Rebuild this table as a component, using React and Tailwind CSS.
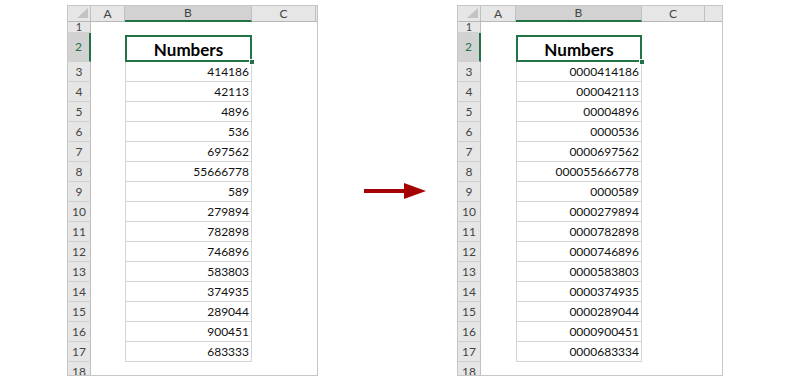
const LEFT = {
  width: 'w-[251px]',
  a: 'w-[34px]',
  b: 'w-[127px]',
  c: 'w-[64px]',
  values: ['414186', '42113', '4896', '536', '697562', '55666778', '589', '279894', '782898', '746896', '583803', '374935', '289044', '900451', '683333'],
};

const RIGHT = {
  width: 'w-[266px]',
  a: 'w-[35px]',
  b: 'w-[126px]',
  c: 'w-[63px]',
  values: ['0000414186', '000042113', '00004896', '0000536', '0000697562', '000055666778', '0000589', '0000279894', '0000782898', '0000746896', '0000583803', '0000374935', '0000289044', '0000900451', '0000683334'],
};

function RowHeader({ n, active, className = '' }) {
  return (
    <div
      className={`flex w-[23px] shrink-0 items-center justify-center border-b border-[#d0d0d0] ${
        active ? 'border-r-2 border-r-[#217346] bg-[#d2d2d2] text-[#217346]' : 'border-r border-r-[#c0c0c0] bg-[#e6e6e6] text-[#444]'
      } ${className}`}
    >
      {n}
    </div>
  );
}

function Sheet({ cfg }) {
  return (
    <div className={`${cfg.width} h-[371px] shrink-0 overflow-hidden border border-[#c6c6c6] bg-white font-['Lato',sans-serif] text-[12px] leading-none`}>
      {/* column headers */}
      <div className="flex h-[16px] border-b border-[#b8b8b8] bg-[#e6e6e6] text-[#444]">
        <div className="flex w-[23px] shrink-0 items-end justify-end border-r border-[#c0c0c0] pb-[3px] pr-[2px]">
          <svg width="11" height="10" viewBox="0 0 11 10">
            <polygon points="11,0 11,10 0,10" fill="#c3c3c3" />
          </svg>
        </div>
        <div className={`${cfg.a} flex shrink-0 items-center justify-center border-r border-[#c0c0c0]`}>A</div>
        <div className={`${cfg.b} -mb-px flex shrink-0 items-center justify-center border-r border-b-2 border-r-[#c0c0c0] border-b-[#217346] bg-[#d2d2d2]`}>
          B
        </div>
        <div className={`${cfg.c} flex shrink-0 items-center justify-center border-r border-[#c0c0c0]`}>C</div>
        <div className="flex-1" />
      </div>

      {/* row 1 (short) */}
      <div className="flex h-[11px]">
        <RowHeader n={1} className="text-[11px] leading-[10px]" />
      </div>

      {/* row 2 */}
      <div className="flex h-[29px]">
        <RowHeader n={2} active />
        <div className={`${cfg.a} shrink-0`} />
        <div className={`${cfg.b} relative shrink-0 pt-[2px]`}>
          <div className="flex h-full items-center justify-center border-2 border-[#217346] pt-[1px] text-[17px] font-bold text-black">
            Numbers
          </div>
          <div className="absolute -bottom-[3px] -right-[3px] z-10 h-[6px] w-[6px] border border-white bg-[#217346]" />
        </div>
      </div>

      {/* data rows */}
      {cfg.values.map((v, i) => (
        <div key={i} className="flex h-[20px]">
          <RowHeader n={i + 3} />
          <div className={`${cfg.a} shrink-0`} />
          <div className={`${cfg.b} flex shrink-0 items-center justify-end border-x border-b border-[#d4d4d4] pr-[2px] text-[#111]`}>
            {v}
          </div>
        </div>
      ))}

      {/* row 18, cut off by the window */}
      <div className="flex h-[20px]">
        <RowHeader n={18} />
      </div>
    </div>
  );
}

function Arrow() {
  return (
    <div className="flex w-[139px] shrink-0 items-center pl-[46px]">
      <svg width="62" height="16" viewBox="0 0 62 16">
        <rect x="0" y="6" width="41" height="4" fill="#a50303" />
        <polygon points="40,0 62,8 40,16" fill="#a50303" />
      </svg>
    </div>
  );
}

export default function App() {
  return (
    <div className="flex h-[381px] w-[800px] overflow-hidden bg-white pl-[67px] pt-[5px]">
      <div className="flex h-[371px]">
        <Sheet cfg={LEFT} />
        <Arrow />
        <Sheet cfg={RIGHT} />
      </div>
    </div>
  );
}
